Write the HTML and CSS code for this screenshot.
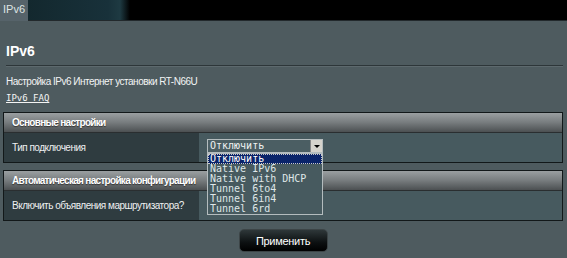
FILE: index.html
```html
<!DOCTYPE html>
<html lang="ru">

<head>
    <meta charset="UTF-8">
    <title>IPv6</title>
    <link rel="stylesheet" href="styles.css">
</head>

<body>
    <div class="topbar">
        <div class="tab">IPv6</div>
        <div class="bar"></div>
    </div>

    <div class="content">
        <h1>IPv6</h1>
        <hr>
        <p class="desc">Настройка IPv6 Интернет установки RT-N66U</p>
        <a class="faq" href="javascript:void(0)">IPv6_FAQ</a>

        <div class="panel">
            <div class="panel-head">Основные настройки</div>
            <div class="panel-row">
                <div class="label">Тип подключения</div>
                <div class="value">
                    <div class="select">
                        <span class="select-text">Отключить</span>
                        <span class="select-arrow"></span>
                        <ul class="options">
                            <li class="selected">Отключить</li>
                            <li>Native IPv6</li>
                            <li>Native with DHCP</li>
                            <li>Tunnel 6to4</li>
                            <li>Tunnel 6in4</li>
                            <li>Tunnel 6rd</li>
                        </ul>
                    </div>
                </div>
            </div>
        </div>

        <div class="panel">
            <div class="panel-head">Автоматическая настройка конфигурации</div>
            <div class="panel-row">
                <div class="label">Включить объявления маршрутизатора?</div>
                <div class="value"></div>
            </div>
        </div>

        <div class="actions">
            <button class="apply">Применить</button>
        </div>
    </div>
</body>

</html>
```

FILE: styles.css
```css
body {
    margin: 0;
    background: #4e5b5f;
    color: #fff;
    font-family: "Liberation Sans", Arial, sans-serif;
    font-size: 10px;
    letter-spacing: -0.5px;
}

.topbar {
    display: flex;
    height: 21px;
}

.tab {
    width: 28px;
    padding: 3px 0 0 3px;
    box-sizing: border-box;
    color: #dfe4e4;
    background: #56636a;
    font-size: 11px;
    letter-spacing: 0;
}

.bar {
    flex: 1;
    background: linear-gradient(to right, #13282e 0, #18313a 80px, #1e3a42 92px, #000 102px, #000 100%);
    border-bottom: 1px solid #22292c;
}

.content {
    padding: 0 4px 0 3px;
}

h1 {
    margin: 22px 0 0 3px;
    font-size: 14px;
    line-height: 16px;
    letter-spacing: 0;
}

hr {
    margin: 6px 0 0 3px;
    border: none;
    border-top: 1px solid #2d3639;
    border-bottom: 1px solid #5d696d;
}

.desc {
    margin: 8px 0 0 3px;
    line-height: 14px;
    color: #f2f4f4;
}

.faq {
    display: inline-block;
    margin: 2px 0 0 3px;
    line-height: 14px;
    color: #f4f4f4;
    font-family: "DejaVu Sans Mono", monospace;
    font-size: 9px;
    letter-spacing: 0;
}

.panel {
    margin-top: 7px;
    border: 1px solid #121819;
}

.faq + .panel {
    margin-top: 7px;
}

.panel-head {
    height: 19px;
    padding-left: 8px;
    line-height: 19px;
    font-weight: bold;
    letter-spacing: -0.7px;
    text-shadow: 0 1px 1px #333;
    background: linear-gradient(#9a9fa1, #777c7e 50%, #4c5052);
    border-bottom: 1px solid #2a2e30;
}

.panel-row {
    display: flex;
    height: 29px;
}

.label {
    flex-shrink: 0;
    width: 187px;
    padding-left: 8px;
    line-height: 29px;
    white-space: nowrap;
    background: #2f3c40;
    color: #eef0f0;
}

.value {
    flex: 1;
    padding: 6px 0 0 8px;
    background: #475a5f;
}

.select {
    position: relative;
    width: 116px;
    height: 14px;
    box-sizing: border-box;
    border: 1px solid #b4bcbe;
    background: #4b5e63;
    font-family: "DejaVu Sans Mono", monospace;
    font-size: 10px;
    letter-spacing: 0;
    color: #eef2f2;
}

.select-text {
    display: block;
    padding-left: 2px;
    line-height: 12px;
}

.select-arrow {
    position: absolute;
    top: 0;
    right: 0;
    width: 11px;
    height: 12px;
    background: #d6d3cc;
    border-left: 1px solid #888;
}

.select-arrow::after {
    content: "";
    position: absolute;
    left: 3px;
    top: 5px;
    border-left: 3px solid transparent;
    border-right: 3px solid transparent;
    border-top: 3px solid #000;
}

.options {
    position: absolute;
    top: 13px;
    left: -1px;
    width: 116px;
    margin: 0;
    padding: 0;
    list-style: none;
    box-sizing: border-box;
    border: 1px solid #b4bcbe;
    background: #475a5f;
    color: #dfe7e8;
}

.options li {
    height: 10px;
    padding-left: 2px;
    line-height: 10px;
    white-space: nowrap;
}

.options li.selected {
    background: #0a246a;
    color: #fff;
    outline: 1px dotted #c8c8c8;
    outline-offset: -1px;
}

.actions {
    display: flex;
    justify-content: center;
    margin-top: 8px;
}

.apply {
    width: 89px;
    height: 23px;
    border: 1px solid #3c4446;
    border-radius: 5px;
    background: linear-gradient(#2e3739, #0c1011 60%, #000);
    color: #fff;
    font-family: "Liberation Sans", Arial, sans-serif;
    font-size: 11px;
    letter-spacing: -0.3px;
}
```
